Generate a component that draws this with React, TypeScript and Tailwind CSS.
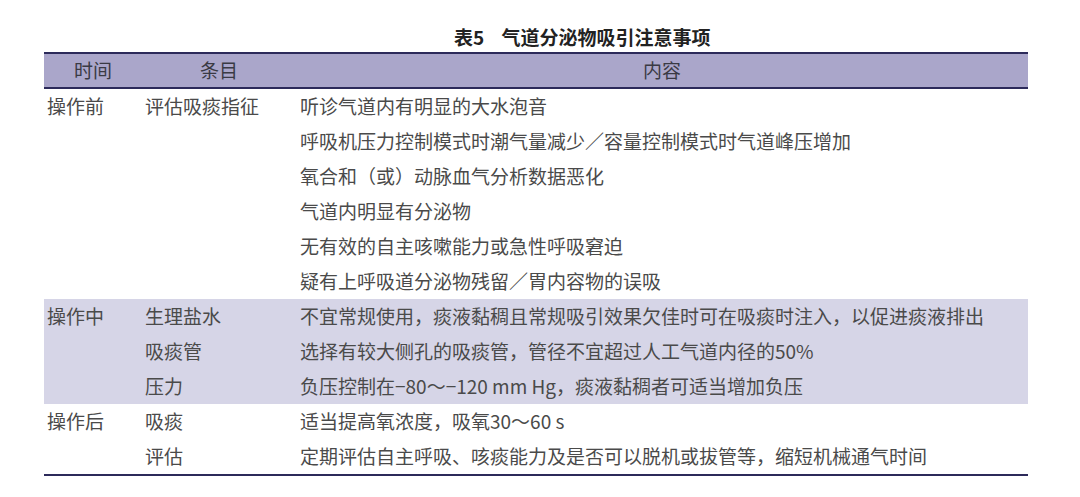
const rows = [
  { time: "操作前", item: "评估吸痰指征", content: "听诊气道内有明显的大水泡音", shaded: false },
  { time: "", item: "", content: "呼吸机压力控制模式时潮气量减少／容量控制模式时气道峰压增加", shaded: false },
  { time: "", item: "", content: "氧合和（或）动脉血气分析数据恶化", shaded: false },
  { time: "", item: "", content: "气道内明显有分泌物", shaded: false },
  { time: "", item: "", content: "无有效的自主咳嗽能力或急性呼吸窘迫", shaded: false },
  { time: "", item: "", content: "疑有上呼吸道分泌物残留／胃内容物的误吸", shaded: false },
  { time: "操作中", item: "生理盐水", content: "不宜常规使用，痰液黏稠且常规吸引效果欠佳时可在吸痰时注入，以促进痰液排出", shaded: true },
  { time: "", item: "吸痰管", content: "选择有较大侧孔的吸痰管，管径不宜超过人工气道内径的50%", shaded: true },
  { time: "", item: "压力", content: "负压控制在−80～−120 mm Hg，痰液黏稠者可适当增加负压", shaded: true },
  { time: "操作后", item: "吸痰", content: "适当提高氧浓度，吸氧30～60 s", shaded: false },
  { time: "", item: "评估", content: "定期评估自主呼吸、咳痰能力及是否可以脱机或拔管等，缩短机械通气时间", shaded: false },
]

export default function App() {
  return (
    <div
      className="w-[1080px] h-[497px] bg-white overflow-hidden"
      style={{ fontFamily: '"Noto Sans CJK SC", "Noto Sans", sans-serif' }}
    >
      {/* 标题 */}
      <div className="pt-[24px] pl-[454px] h-[52px] flex items-start">
        <h2 className="text-[19px] leading-[26px] font-bold text-[#222] whitespace-pre">
          表5{"    "}气道分泌物吸引注意事项
        </h2>
      </div>

      {/* 表格 */}
      <div className="ml-[44px] w-[984px]">
        <div className="grid grid-cols-[98px_154px_1fr] h-[37px] bg-[#aaa6ca] border-y-2 border-[#2c2a5a] text-[19px] text-[#3a3a44] items-center">
          <div className="text-center">时间</div>
          <div className="text-center">条目</div>
          <div className="text-center">内容</div>
        </div>
        {rows.map((r, i) => (
          <div
            key={i}
            className={
              "grid grid-cols-[98px_154px_1fr] h-[35px] items-center text-[19px] text-[#4a4a4a] whitespace-nowrap " +
              (r.shaded ? "bg-[#d6d5e7]" : "bg-white")
            }
          >
            <div className="pl-[3px]">{r.time}</div>
            <div className="pl-[3px]">{r.item}</div>
            <div className="pl-[4px]">{r.content}</div>
          </div>
        ))}
        <div className="h-[2px] bg-[#2c2a5a]" />
      </div>
    </div>
  )
}
